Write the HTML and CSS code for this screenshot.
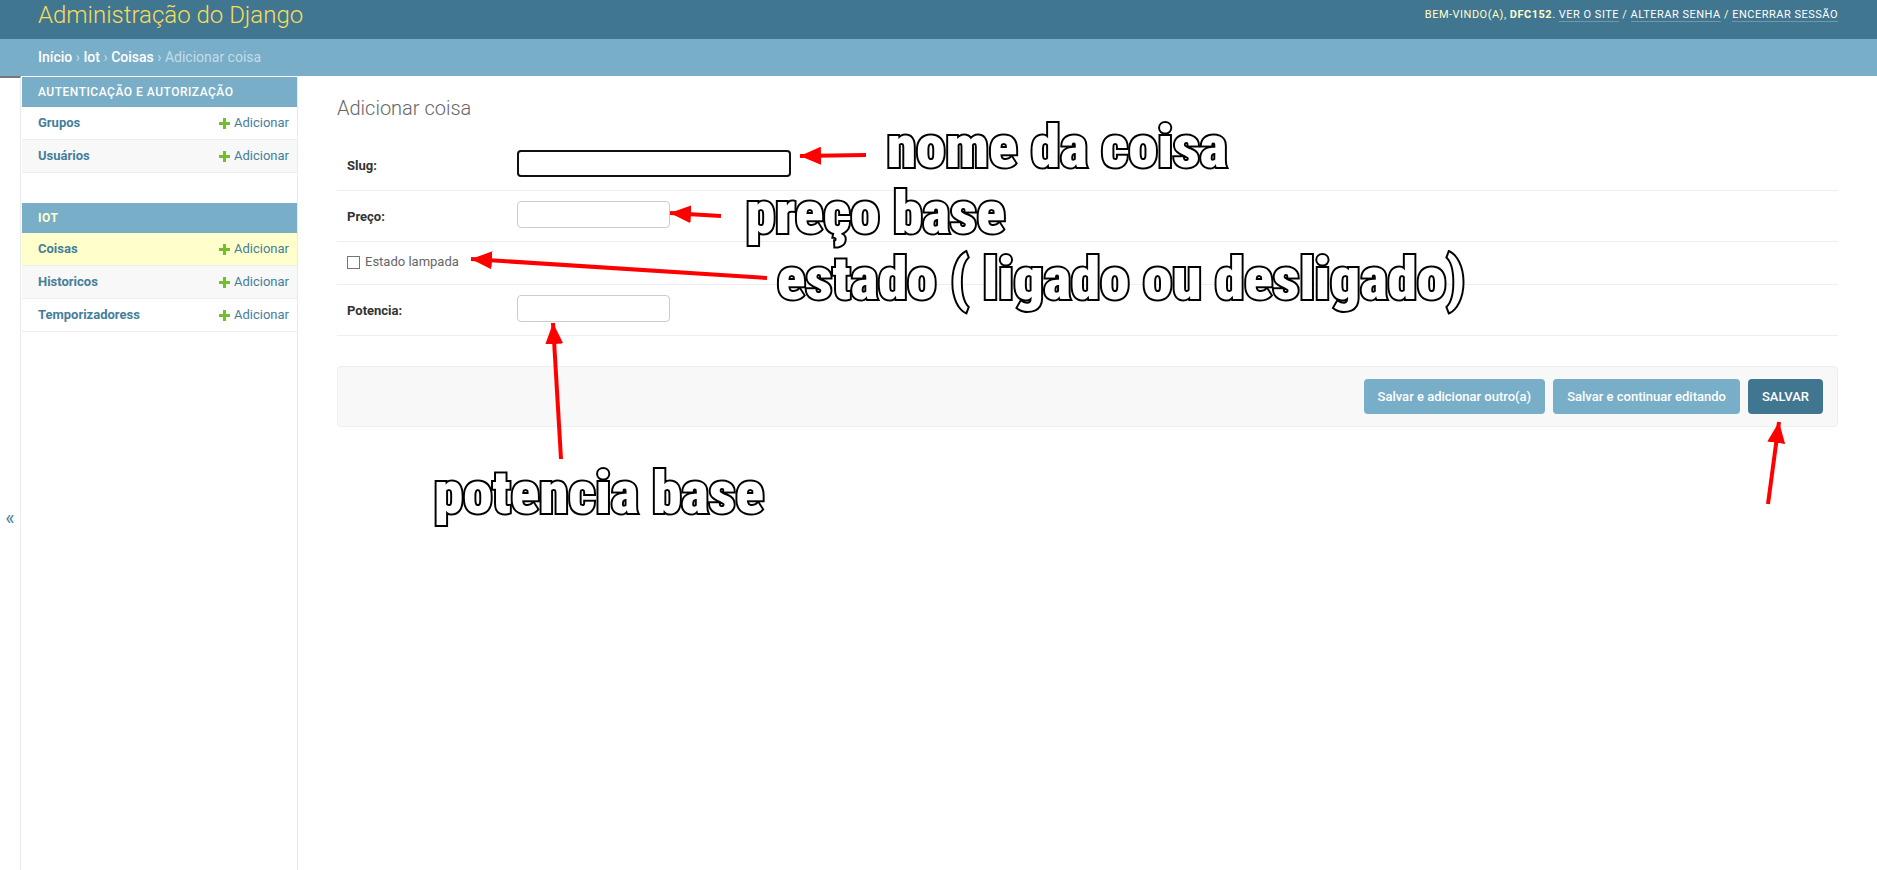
FILE: index.html
```html
<!DOCTYPE html>
<html lang="pt-br">
<head>
<meta charset="utf-8">
<title>Adicionar coisa | Administração do Django</title>
<link rel="stylesheet" href="styles.css">
</head>
<body>
<header class="header">
  <h1 class="site-name"><a href="#">Administração do Django</a></h1>
  <div class="user-tools">Bem-vindo(a), <strong>dfc152</strong>. <a href="#">Ver o site</a> / <a href="#">Alterar senha</a> / <a href="#">Encerrar sessão</a></div>
</header>
<nav class="breadcrumbs"><a href="#">Início</a> › <a href="#">Iot</a> › <a href="#">Coisas</a> › Adicionar coisa</nav>
<div class="main">
  <button class="toggle" type="button" aria-label="Alternar navegação">«</button>
  <nav class="sidebar">
    <table class="module">
      <caption><a href="#">Autenticação e Autorização</a></caption>
      <tbody>
        <tr><th scope="row"><a href="#">Grupos</a></th><td><a class="add" href="#"><svg class="plus" viewBox="0 0 11 11"><path d="M4 0h3v4h4v3H7v4H4V7H0V4h4z"/></svg>Adicionar</a></td></tr>
        <tr><th scope="row"><a href="#">Usuários</a></th><td><a class="add" href="#"><svg class="plus" viewBox="0 0 11 11"><path d="M4 0h3v4h4v3H7v4H4V7H0V4h4z"/></svg>Adicionar</a></td></tr>
      </tbody>
    </table>
    <table class="module current-app">
      <caption><a href="#">Iot</a></caption>
      <tbody>
        <tr class="current"><th scope="row"><a href="#">Coisas</a></th><td><a class="add" href="#"><svg class="plus" viewBox="0 0 11 11"><path d="M4 0h3v4h4v3H7v4H4V7H0V4h4z"/></svg>Adicionar</a></td></tr>
        <tr><th scope="row"><a href="#">Historicos</a></th><td><a class="add" href="#"><svg class="plus" viewBox="0 0 11 11"><path d="M4 0h3v4h4v3H7v4H4V7H0V4h4z"/></svg>Adicionar</a></td></tr>
        <tr><th scope="row"><a href="#">Temporizadoress</a></th><td><a class="add" href="#"><svg class="plus" viewBox="0 0 11 11"><path d="M4 0h3v4h4v3H7v4H4V7H0V4h4z"/></svg>Adicionar</a></td></tr>
      </tbody>
    </table>
  </nav>
  <main class="content">
    <h2 class="page-title">Adicionar coisa</h2>
    <form>
      <div class="form-row"><label for="slug">Slug:</label><input class="text wide" type="text" id="slug"></div>
      <div class="form-row"><label for="preco">Preço:</label><input class="text" type="text" id="preco"></div>
      <div class="form-row check-row"><input class="check" type="checkbox" id="estado"><label for="estado">Estado lampada</label></div>
      <div class="form-row"><label for="potencia">Potencia:</label><input class="text" type="text" id="potencia"></div>
      <div class="submit-row">
        <button type="button">Salvar e adicionar outro(a)</button>
        <button type="button">Salvar e continuar editando</button>
        <button type="button" class="default">Salvar</button>
      </div>
    </form>
  </main>
</div>
<svg class="notes" width="1877" height="870" viewBox="0 0 1877 870">
  <defs>
    <marker id="head" markerUnits="userSpaceOnUse" markerWidth="22" markerHeight="18" refX="21" refY="9" orient="auto"><path d="M0 0L21 9L0 18z" fill="#f00"/></marker>
  </defs>
  <g class="arrows">
    <path d="M866 155L800 156"/>
    <path d="M721 216L670 213"/>
    <path d="M767 278L471 259"/>
    <path d="M561 459L553 323"/>
    <path d="M1768 504L1779 422"/>
  </g>
  <g class="note-text">
    <text x="887" y="167">nome da coisa</text>
    <text x="746" y="233">preço base</text>
    <text x="777" y="299">estado ( ligado ou desligado)</text>
    <text x="434" y="513">potencia base</text>
  </g>
</svg>
</body>
</html>
```
FILE: styles.css
```css
* { box-sizing: border-box; }
body {
  margin: 0;
  min-height: 100vh;
  display: flex;
  flex-direction: column;
  font: 13px/16px Roboto, "Liberation Sans", sans-serif;
  color: #333;
  background: #fff;
}
a { color: #447e9b; text-decoration: none; }

.header {
  display: flex;
  justify-content: space-between;
  align-items: flex-start;
  height: 39px;
  padding: 0 39px 0 38px;
  background: #417690;
  color: #ffc;
}
.site-name { margin: 0; font-size: 24px; font-weight: 300; line-height: 30px; }
.site-name a { color: #f5dd5d; }
.user-tools {
  padding-top: 8px;
  font-size: 11px;
  line-height: 14px;
  font-weight: 400;
  letter-spacing: 0.5px;
  text-transform: uppercase;
}
.user-tools a { color: #fff; border-bottom: 1px solid rgba(255, 255, 255, 0.25); }
.user-tools strong { font-weight: 700; }

.breadcrumbs {
  padding: 10px 38px 11px;
  background: #79aec8;
  color: #c4dce8;
  font-size: 14px;
}
.breadcrumbs a { color: #fff; font-weight: 500; }

.main { display: flex; flex: 1; }
.toggle {
  width: 21px;
  padding: 88px 0 0;
  border: 0;
  border-top: 2px solid #777;
  border-right: 1px solid #eaeaea;
  background: #fff;
  color: #447e9b;
  font: 20px/24px Roboto, sans-serif;
  text-align: center;
}
.sidebar { width: 277px; padding: 1px 0 0 1px; border-right: 1px solid #eaeaea; }
.module { width: 100%; margin-bottom: 30px; border-collapse: collapse; }
.module caption {
  padding: 7px 16px;
  background: #79aec8;
  font-size: 12px;
  font-weight: 500;
  letter-spacing: 0.5px;
  text-align: left;
  text-transform: uppercase;
}
.module caption a { color: #fff; }
.current-app caption a { color: #ffc; font-weight: 700; }
.module th, .module td { padding: 8px; border-bottom: 1px solid #eee; text-align: left; }
.module th { padding-left: 16px; font-weight: 700; }
.module td { width: 95px; }
.module tr:nth-child(even) { background: #f8f8f8; }
.module .current { background: #ffc; }
.add { display: flex; align-items: center; justify-content: flex-end; gap: 4px; }
.plus { width: 11px; height: 11px; fill: #70bf2b; }

.content { flex: 1; padding: 20px 39px 0; }
.page-title { margin: 0 0 30px; font-size: 20px; font-weight: 300; line-height: 24px; color: #666; }
.form-row {
  display: flex;
  height: 51px;
  padding: 10px;
  border-bottom: 1px solid #eee;
}
.form-row:first-child { height: 41px; padding-top: 0; }
.form-row label { width: 170px; padding-top: 8px; font-weight: 700; }
.text {
  width: 153px;
  height: 27px;
  border: 1px solid #ccc;
  border-radius: 4px;
  padding: 5px 6px;
  font: inherit;
}
.wide { width: 274px; border: 2px solid #101010; }
.form-row.check-row { height: 43px; padding-bottom: 12px; gap: 5px; align-items: center; }
.check {
  appearance: none;
  width: 13px;
  height: 13px;
  margin: 0;
  border: 1px solid #767676;
  background: #fff;
}
.form-row.check-row label { width: auto; padding: 0; font-weight: 400; color: #666; }

.submit-row {
  display: flex;
  justify-content: flex-end;
  gap: 8px;
  margin-top: 30px;
  padding: 12px 14px;
  border: 1px solid #eee;
  border-radius: 4px;
  background: #f8f8f8;
}
.submit-row button {
  height: 35px;
  padding: 0 14px;
  border: 0;
  border-radius: 4px;
  background: #79aec8;
  color: #fff;
  font: 500 13px/16px Roboto, sans-serif;
}
.submit-row .default { background: #417690; text-transform: uppercase; }

/* Annotations drawn over the page */
.notes { position: absolute; top: 0; left: 0; pointer-events: none; }
.arrows path { stroke: #f00; stroke-width: 4; marker-end: url(#head); }
.note-text {
  font: 900 59px Impact, "Liberation Sans Narrow", "Roboto Condensed", "Open Sans Condensed", "Liberation Sans", sans-serif;
  fill: #fff;
  stroke: #000;
  stroke-width: 4px;
  paint-order: stroke;
}
```
